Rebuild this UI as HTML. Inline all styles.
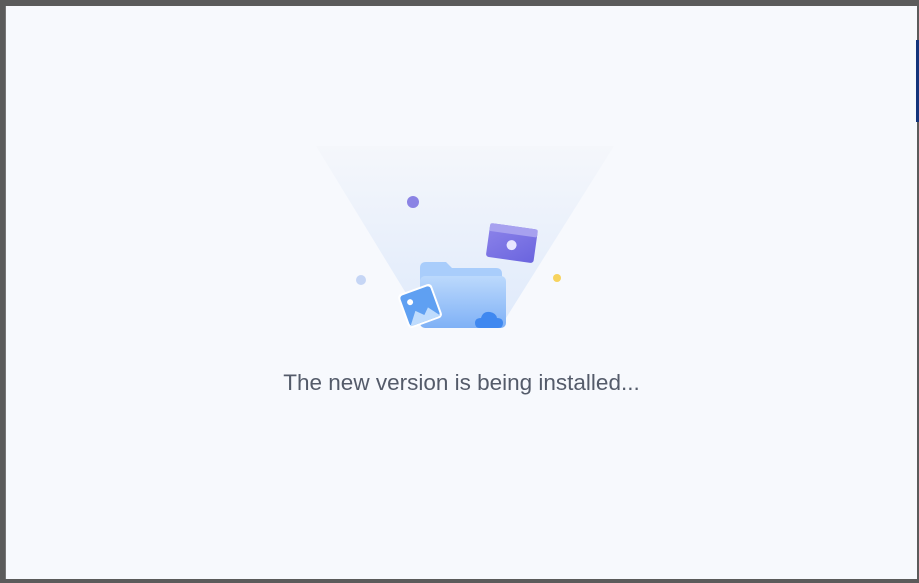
<!DOCTYPE html>
<html><head><style>
html,body{margin:0;padding:0;width:919px;height:583px;overflow:hidden;background:#5b5b5b;}
.win{position:absolute;left:5px;top:6px;width:911px;height:573px;background:#f7f9fd;border-left:1px solid #777;}
.strip{position:absolute;left:916px;top:40px;width:3px;height:82px;background:#13337a;}
.txt{position:absolute;left:0;width:911px;top:364px;text-align:center;font-family:"Liberation Sans",sans-serif;font-size:22.5px;color:#545b6a;}
</style></head><body>
<div class="win">
<svg width="911" height="573" style="position:absolute;left:0;top:0">
<defs>
<linearGradient id="cone" x1="0" y1="0" x2="0" y2="1">
<stop offset="0" stop-color="#f5f7fb"/><stop offset="1" stop-color="#dfeafb"/></linearGradient>
<linearGradient id="fold" x1="0" y1="0" x2="0" y2="1">
<stop offset="0" stop-color="#bcd9fc"/><stop offset="1" stop-color="#7fb1f6"/></linearGradient>
<linearGradient id="vid" x1="0" y1="0" x2="1" y2="1">
<stop offset="0" stop-color="#8d84ea"/><stop offset="1" stop-color="#6a64de"/></linearGradient>
</defs>
<polygon points="310,140 608,140 495,320 420,320" fill="url(#cone)"/>
<circle cx="407" cy="196" r="6" fill="#8b83e4"/>
<circle cx="355" cy="274" r="5" fill="#c6d6f5"/>
<circle cx="551" cy="272" r="4" fill="#f7d35e"/>
<g transform="rotate(8 505 236)">
<rect x="482" y="220" width="48" height="34" rx="3" fill="url(#vid)"/>
<rect x="482" y="220" width="48" height="8" rx="2" fill="#a7a1ef"/>
<circle cx="506" cy="239" r="5" fill="#e8e6ff"/>
</g>
<path d="M414 262 q0-6 6-6 h20 l6 6 h44 q6 0 6 6 v50 h-82 z" fill="#a9cdfb"/>
<rect x="414" y="270" width="86" height="52" rx="5" fill="url(#fold)"/>
<g transform="rotate(-20 414 300)">
<rect x="396" y="282" width="36" height="36" rx="4" fill="#fff"/>
<rect x="398" y="284" width="32" height="32" rx="3" fill="#5fa0f2"/>
<circle cx="406" cy="293" r="3" fill="#fff"/>
<path d="M398 316 l10-13 7 7 6-6 9 12 z" fill="#bfdcfd"/>
</g>
<path d="M474 322 q-5 0-5-5 q0-5 6-5 q2-7 9-6 q6 1 7 6 q6 0 6 5 q0 5-5 5 z" fill="#3f88f0"/>
</svg>
<div class="txt">The new version is being installed...</div>
</div>
<div class="strip"></div>
</body></html>
